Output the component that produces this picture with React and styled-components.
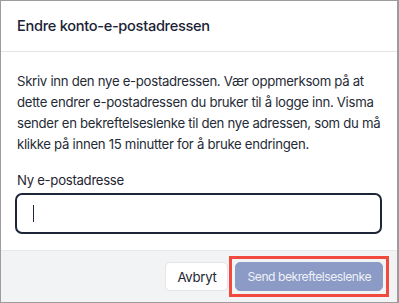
import React from "react";
import styled, { createGlobalStyle } from "styled-components";

const GlobalStyle = createGlobalStyle`
  html, body {
    margin: 0;
    padding: 0;
    background: #ffffff;
  }
  body {
    font-family: Inter, "Noto Sans", "Liberation Sans", sans-serif;
    color: #1d2433;
  }
`;

const Dialog = styled.div`
  box-sizing: border-box;
  width: 399px;
  height: 303px;
  display: flex;
  flex-direction: column;
  background: #ffffff;
  border: 1px solid #9c9c9c;
  border-right-width: 2px;
  overflow: hidden;
`;

const Header = styled.div`
  height: 50px;
  flex-shrink: 0;
  display: flex;
  align-items: center;
  padding: 0 16px;
  border-bottom: 1px solid #e2e4e8;
  font-size: 14.6px;
  font-weight: 500;
  color: #1a2233;
  letter-spacing: -0.3px;
`;

const Body = styled.div`
  flex: 1;
  padding: 19px 10px 0 16px;
`;

const Text = styled.p`
  margin: 0;
  font-size: 13.2px;
  line-height: 21px;
  color: #252b36;
  letter-spacing: -0.3px;
`;

const Label = styled.label`
  display: block;
  margin-top: 16px;
  margin-bottom: 4px;
  font-size: 13.2px;
  line-height: 18px;
  color: #1f2533;
  letter-spacing: -0.3px;
`;

const Input = styled.div`
  box-sizing: border-box;
  height: 41px;
  margin-left: -2px;
  margin-right: 5px;
  border: 2px solid #1d2638;
  border-radius: 7px;
  display: flex;
  align-items: center;
  padding-left: 16px;
`;

const Caret = styled.span`
  width: 1px;
  height: 17px;
  background: #1d2638;
`;

const Footer = styled.div`
  height: 51px;
  flex-shrink: 0;
  display: flex;
  align-items: center;
  justify-content: flex-end;
  gap: 1px;
  padding-right: 8px;
  background: #f2f3f5;
  border-top: 1px solid #e6e8eb;
`;

const FocusRing = styled.span`
  display: flex;
  padding: 3px;
  border: 3px solid #f2493f;
`;

const Button = styled.button`
  box-sizing: border-box;
  height: 29px;
  padding: 0 ${p => (p.$primary ? "11px" : "11px")};
  border-radius: 5px;
  font-family: inherit;
  font-size: ${p => (p.$primary ? "12.2px" : "13.2px")};
  letter-spacing: ${p => (p.$primary ? "-0.5px" : "-0.3px")};
  border: 1px solid ${p => (p.$primary ? "#8b9bc5" : "#e3e5e9")};
  background: ${p => (p.$primary ? "#8b9bc5" : "#ffffff")};
  color: ${p => (p.$primary ? "#eef1f8" : "#1d2433")};
  outline: none;
`;

export default function App() {
  return (
    <>
      <GlobalStyle />
      <Dialog>
        <Header>Endre konto-e-postadressen</Header>
        <Body>
          <Text>
            Skriv inn den nye e-postadressen. Vær oppmerksom på at dette
            endrer e-postadressen du bruker til å logge inn. Visma sender en
            bekreftelseslenke til den nye adressen, som du må klikke på innen
            15 minutter for å bruke endringen.
          </Text>
          <Label>Ny e-postadresse</Label>
          <Input>
            <Caret />
          </Input>
        </Body>
        <Footer>
          <Button>Avbryt</Button>
          <FocusRing>
            <Button $primary>Send bekreftelseslenke</Button>
          </FocusRing>
        </Footer>
      </Dialog>
    </>
  );
}
